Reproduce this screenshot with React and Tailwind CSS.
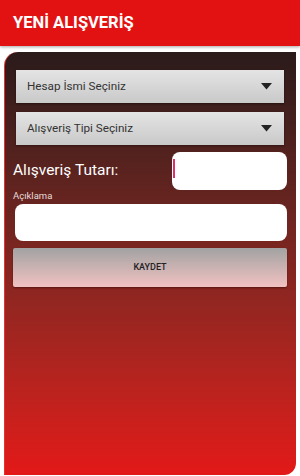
import React, { useState } from "react";

function SelectBox({ label }) {
  return (
    <div className="flex h-[33px] items-center justify-between bg-gradient-to-b from-[#e4e4e4] to-[#c9c9c9] pl-[11px] pr-[12px] shadow-[0_1px_2px_rgba(0,0,0,0.4)]">
      <span className="text-[11.7px] text-[#333]">{label}</span>
      <svg width="11" height="7" viewBox="0 0 11 7">
        <path d="M0 0 L11 0 L5.5 6.5 Z" fill="#222" />
      </svg>
    </div>
  );
}

function App() {
  const [amount, setAmount] = useState("");
  const [note, setNote] = useState("");

  return (
    <div className="h-[476px] w-[300px] overflow-hidden bg-white font-['Roboto',sans-serif]">
      <div className="flex h-[46px] items-center bg-[#e31212] pl-[13px] shadow-[0_1px_3px_rgba(0,0,0,0.35)]">
        <h1 className="text-[16.5px] font-bold text-white">YENİ ALIŞVERİŞ</h1>
      </div>

      <div className="mx-[4px] mt-[6px] h-[423px] rounded-tl-[14px] rounded-br-[12px] border-l border-[#e83030] bg-gradient-to-b from-[#2a1a1a] to-[#e31818] pl-[10px] pr-[9px] pt-[18px]">
        <div className="flex flex-col gap-[9px] pl-[1px] pr-[3px]">
          <SelectBox label="Hesap İsmi Seçiniz" />
          <SelectBox label="Alışveriş Tipi Seçiniz" />
        </div>

        <div className="mt-[7px] flex items-center justify-between">
          <span className="-ml-[2px] text-[15.5px] text-white">Alışveriş Tutarı:</span>
          <div className="relative h-[38px] w-[115px] rounded-[8px] bg-white">
            <span className="absolute left-[1px] top-[7px] h-[19px] w-[2px] bg-[#e0306a]" />
            <input
              className="h-full w-full rounded-[8px] bg-transparent px-2 outline-none"
              value={amount}
              onChange={(e) => setAmount(e.target.value)}
            />
          </div>
        </div>

        <div className="-ml-[2px] text-[9.5px] leading-[12px] text-[#e8dcdc]">Açıklama</div>
        <input
          className="mt-[2px] h-[37px] w-full rounded-[8px] bg-white px-[2px] text-[13px] text-white outline-none placeholder:text-white"
          placeholder="Açıklama..."
          value={note}
          onChange={(e) => setNote(e.target.value)}
        />

        <button className="mt-[7px] -ml-[2px] flex h-[39px] w-[calc(100%+2px)] items-center justify-center rounded-[2px] bg-gradient-to-b from-[#a2a2a2] to-[#f2c2c2] text-[9px] font-medium text-[#222] shadow-[0_1px_2px_rgba(0,0,0,0.4)]">
          KAYDET
        </button>
      </div>
    </div>
  );
}

export default App;
